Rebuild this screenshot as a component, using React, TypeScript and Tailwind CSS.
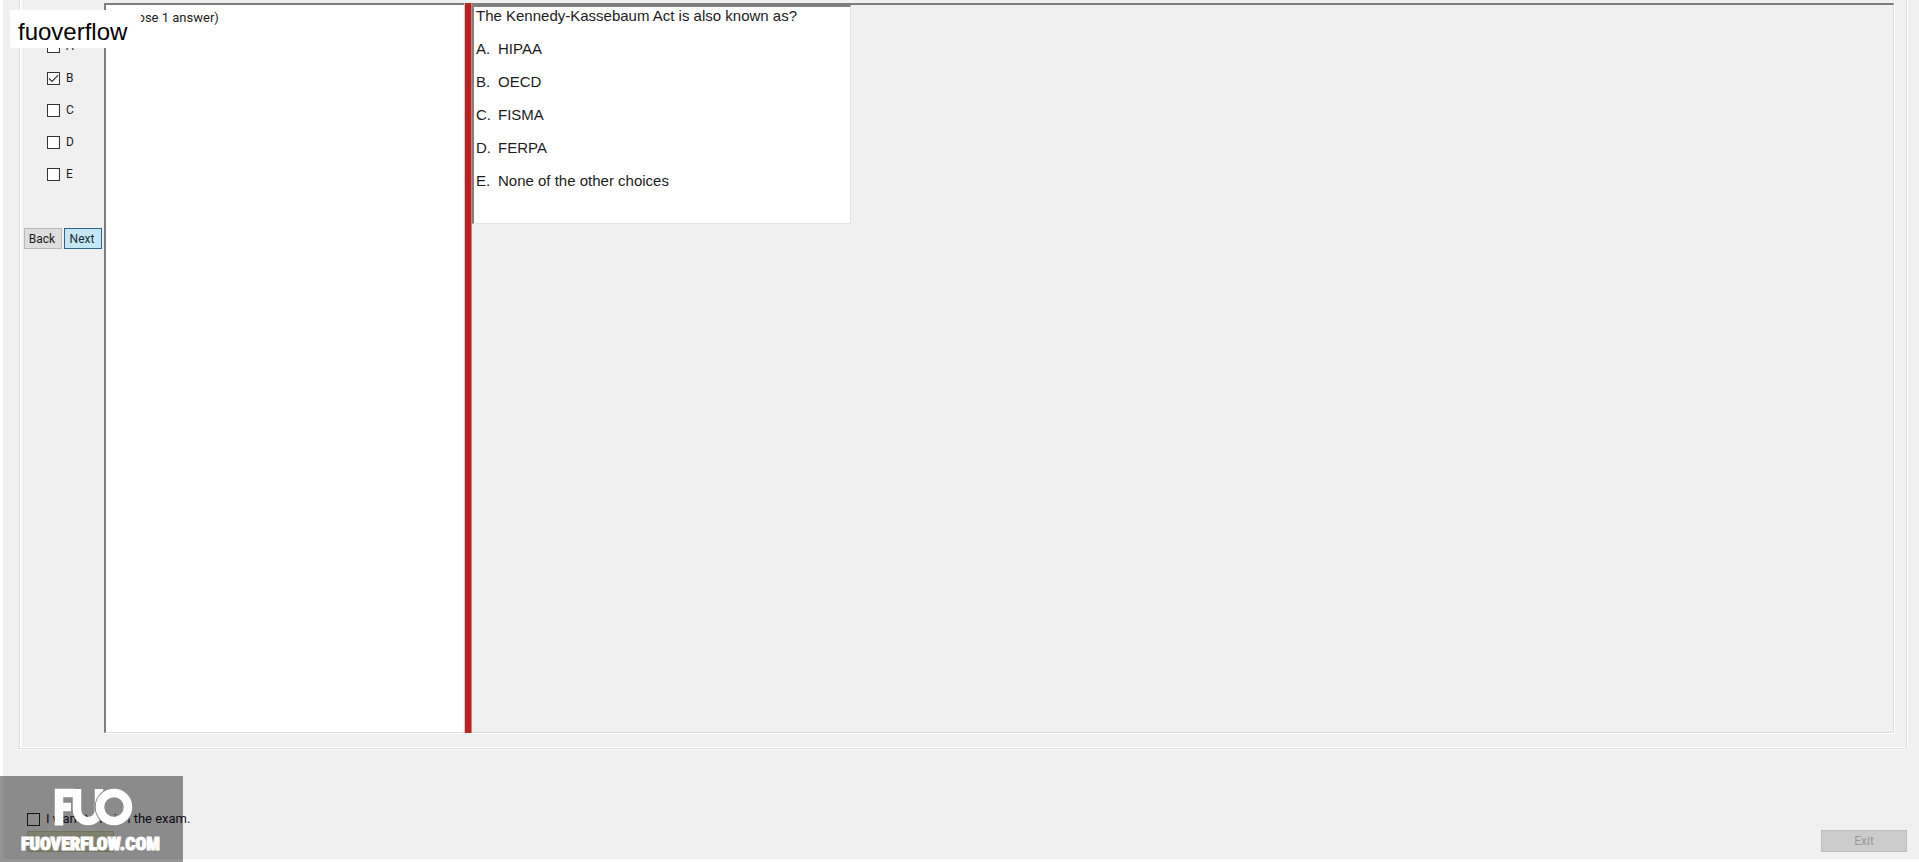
import { useState } from 'react';

const choices = [
  { id: 'A', text: 'HIPAA' },
  { id: 'B', text: 'OECD' },
  { id: 'C', text: 'FISMA' },
  { id: 'D', text: 'FERPA' },
  { id: 'E', text: 'None of the other choices' },
];

const boxClass =
  'col-start-1 row-start-1 size-[13px] appearance-none border border-[#333333] bg-white';

function AnswerBox({ id, checked, onToggle }: { id: string; checked: boolean; onToggle: () => void }) {
  return (
    <label className="flex h-8 items-center gap-1.5 text-xs text-[#1c1c1c]">
      <span className="grid place-items-center">
        <input type="checkbox" className={boxClass} checked={checked} onChange={onToggle} />
        {checked && (
          <svg viewBox="0 0 13 13" className="pointer-events-none col-start-1 row-start-1 size-[13px]" fill="none" stroke="#333333" strokeWidth="1.2">
            <path d="M2 6.500 5 9.500 11.200 3.200" />
          </svg>
        )}
      </span>
      {id}
    </label>
  );
}

function Watermark() {
  return (
    <div className="pointer-events-none absolute bottom-0 left-0 flex h-[86px] w-[183px] flex-col items-center bg-black/42 pt-3">
      <svg viewBox="0 0 80 40" className="ml-0.5 h-10 w-20 shrink-0" fill="none" stroke="#ffffff">
        <path d="M6 37.500V5H22M6 19H18" strokeWidth="8.500" />
        <path d="M24 1V21C24 29 29 33 35 33C41 33 46 29 46 21V1" strokeWidth="8.500" />
        <circle cx="61" cy="19" r="18.700" stroke="#8b8b8b" strokeWidth="1.200" />
        <circle cx="61" cy="19" r="14" strokeWidth="8.500" />
      </svg>
      <span className="mt-1 mr-0.5 font-['Roboto_Condensed','Liberation_Sans',sans-serif] text-lg leading-6 font-black text-white [-webkit-text-stroke:1px_#ffffff]">
        FUOVERFLOW.COM
      </span>
    </div>
  );
}

export default function App() {
  const [selected, setSelected] = useState('B');
  const [finish, setFinish] = useState(false);

  return (
    <div className="relative bg-white pb-[3px] pl-[3px] font-[Roboto,sans-serif] text-black">
      <div className="flex min-h-[calc(100vh-3px)] flex-col bg-[#f0f0f0]">
        <main className="mr-3 ml-4 flex flex-1 border-r border-b border-l border-[#dcdcdc] shadow-[0_1px_0_#ffffff,1px_0_0_#ffffff,inset_2px_-1px_0_#ffffff]">
          <aside className="flex w-[84px] shrink-0 flex-col pt-[30px] pl-1">
            <div className="pl-[23px]">
              {choices.map((c) => (
                <AnswerBox key={c.id} id={c.id} checked={selected === c.id} onToggle={() => setSelected(c.id)} />
              ))}
            </div>
            <div className="mt-[38px] flex gap-0.5 text-xs">
              <button className="h-[21px] w-[38px] border border-[#b8b8b8] bg-[#dedede] pr-0.5 text-[#1c1c1c]">Back</button>
              <button className="h-[21px] w-[38px] border border-[#2f6685] bg-[#c4e6f6] pr-0.5 text-[#1c2c3c]">Next</button>
            </div>
          </aside>

          <div className="mt-[3px] mr-3 mb-[15px] flex flex-1 border-t-2 border-r border-b border-l-2 border-t-[#7c7c7c] border-r-[#dcdcdc] border-b-[#dcdcdc] border-l-[#7c7c7c] shadow-[1px_1px_0_#ffffff]">
            <section className="w-[358px] shrink-0 bg-white pt-[3px] pl-1">
              <p className="text-[13px] leading-5 text-[#1c1c1c]">(Choose 1 answer)</p>
            </section>
            <div className="-mt-0.5 -mb-px w-2 shrink-0 border-r border-l border-r-[#b08a88] border-l-[#f0c4c2] bg-[#bb221f]" />
            <section className="flex-1">
              <article className="h-[219px] w-[379px] border-t-2 border-r border-b border-l-2 border-t-[#808080] border-r-[#e4e4e4] border-b-[#e4e4e4] border-l-[#808080] bg-white pl-0.5 font-['Liberation_Sans',Arial,sans-serif] text-[15px] text-[#1c1c1c]">
                <h1 className="h-[26px] leading-[18px]">The Kennedy-Kassebaum Act is also known as?</h1>
                <ol>
                  {choices.map((c) => (
                    <li key={c.id} className="flex h-[33px] items-center">
                      <span className="w-[22px]">{c.id}.</span>
                      {c.text}
                    </li>
                  ))}
                </ol>
              </article>
            </section>
          </div>
        </main>

        <footer className="flex h-[110px] items-end justify-between pr-3 pb-[7px] pl-6">
          <div className="flex flex-col gap-0.5">
            <label className="flex items-center gap-1.5 text-[13px] leading-5 text-[#15152a]">
              <input
                type="checkbox"
                checked={finish}
                onChange={() => setFinish(!finish)}
                className="size-[13px] appearance-none border border-[#222222] bg-transparent"
              />
              I want to finish the exam.
            </label>
            <button aria-label="Finish" className="h-[21px] w-[87px] border border-[#c4c4a4] bg-[#dcdcc0]" />
          </div>
          <button disabled className="h-[22px] w-[86px] border border-[#bdbdbd] bg-[#cccccc] text-xs text-[#9a9a9a]">
            Exit
          </button>
        </footer>
      </div>

      <div className="pointer-events-none absolute top-2.5 left-2.5 h-[38px] w-[131px] bg-white pl-2 font-['Liberation_Sans',Arial,sans-serif] text-2xl leading-[44px]">
        fuoverflow
      </div>
      <Watermark />
    </div>
  );
}
